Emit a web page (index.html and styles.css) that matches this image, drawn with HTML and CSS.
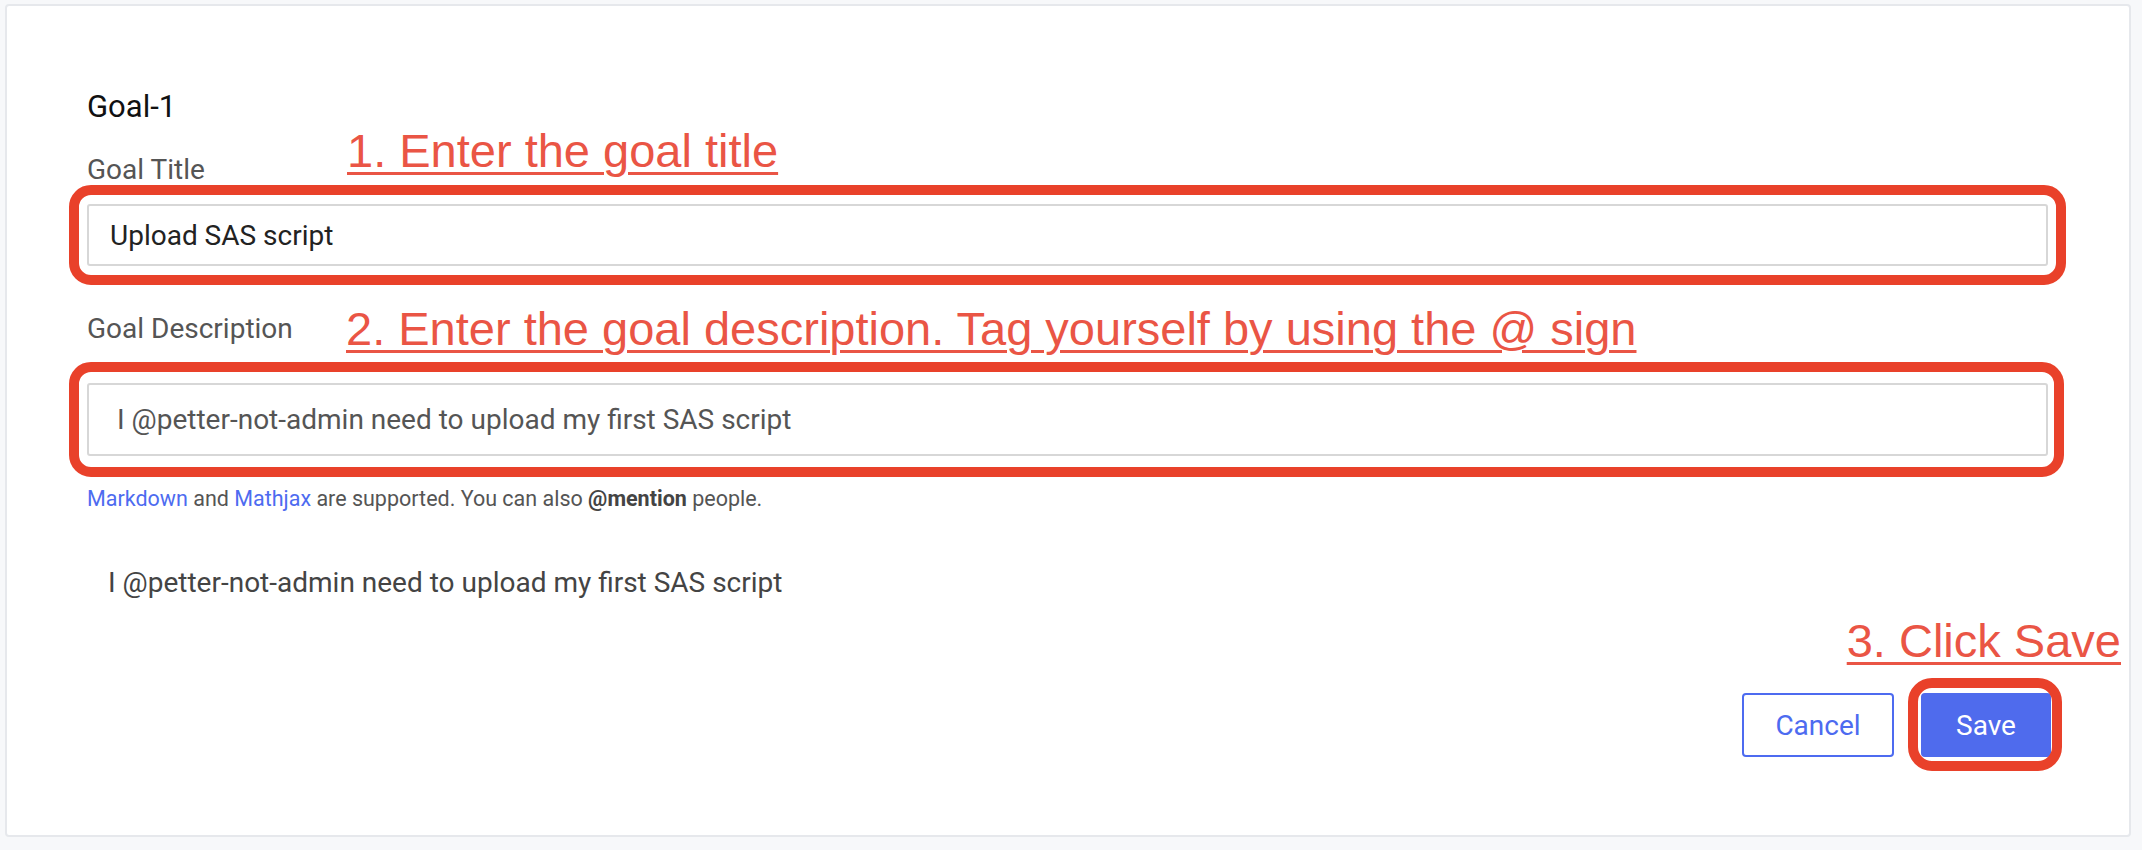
FILE: index.html
```html
<!DOCTYPE html>
<html lang="en">
<head>
<meta charset="utf-8">
<title>Goal-1</title>
<link rel="stylesheet" href="styles.css">
</head>
<body>
<div class="card">
  <h2 class="goal-heading">Goal-1</h2>

  <div class="field field-title">
    <label class="field-label" for="goal-title">Goal Title</label>
    <span class="annot annot-1">1. Enter the goal title</span>
    <div class="boxed boxed-title">
      <input id="goal-title" class="text-input" type="text" value="Upload SAS script">
    </div>
  </div>

  <div class="field field-desc">
    <label class="field-label" for="goal-desc">Goal Description</label>
    <span class="annot annot-2">2. Enter the goal description. Tag yourself by using the @ sign</span>
    <div class="boxed boxed-desc">
      <div id="goal-desc" class="desc-input">I @petter-not-admin need to upload my first SAS script</div>
    </div>
  </div>

  <p class="help">
    <a class="help-link" href="#">Markdown</a> and <a class="help-link" href="#">Mathjax</a> are supported. You can also <strong>@mention</strong> people.
  </p>

  <p class="preview">I @petter-not-admin need to upload my first SAS script</p>

  <div class="actions">
    <span class="annot annot-3">3. Click Save</span>
    <button class="btn btn-cancel" type="button">Cancel</button>
    <div class="boxed boxed-save">
      <button class="btn btn-save" type="button">Save</button>
    </div>
  </div>
</div>
</body>
</html>
```

FILE: styles.css
```css
* {
  box-sizing: border-box;
}

html, body {
  margin: 0;
  padding: 0;
}

body {
  background: #f7f8fa;
  font-family: Roboto, "Noto Sans", "Liberation Sans", sans-serif;
  padding: 4px 11px 13px 5px;
}

.card {
  background: #ffffff;
  border: 2px solid #e6e8ec;
  border-radius: 4px;
  padding: 83px 81px 78px 80px;
}

.goal-heading {
  margin: 0;
  font-size: 31px;
  line-height: 36px;
  font-weight: 400;
  color: #111111;
}

.field {
  position: relative;
}

.field-title {
  margin-top: 29px;
}

.field-desc {
  margin-top: 47px;
}

.field-label {
  display: block;
  font-size: 28px;
  line-height: 32px;
  color: #555555;
}

.field-title .boxed {
  margin-top: 18px;
}

.field-desc .boxed {
  margin-top: 38px;
}

.boxed {
  position: relative;
}

.boxed::after {
  content: "";
  position: absolute;
  border: 10px solid #e9412a;
  border-radius: 22px;
  pointer-events: none;
}

.boxed-title::after {
  inset: -19px -18px;
}

.boxed-desc::after {
  inset: -21px -16px -21px -18px;
}

.boxed-save::after {
  inset: -15px -11px -14px -13px;
  border-radius: 24px;
}

.text-input {
  display: block;
  width: 100%;
  height: 62px;
  border: 2px solid #d7d7d7;
  border-radius: 3px;
  padding: 0 21px;
  font-family: Roboto, "Noto Sans", sans-serif;
  font-size: 28px;
  color: #222222;
  background: #ffffff;
  outline: none;
}

.desc-input {
  display: flex;
  align-items: center;
  height: 73px;
  border: 2px solid #d7d7d7;
  border-radius: 3px;
  padding: 0 28px;
  font-size: 28px;
  color: #555555;
  background: #ffffff;
}

.help {
  margin: 30px 0 0;
  font-size: 21.5px;
  line-height: 25px;
  color: #555555;
}

.help-link {
  color: #4d6bf0;
  text-decoration: none;
}

.help strong {
  font-weight: 700;
  color: #444444;
}

.preview {
  margin: 55px 0 0;
  padding-left: 21px;
  font-size: 28px;
  line-height: 33px;
  color: #444444;
}

.actions {
  position: relative;
  margin-top: 94px;
  margin-right: -3px;
  display: flex;
  justify-content: flex-end;
  align-items: center;
  gap: 27px;
}

.btn {
  display: flex;
  align-items: center;
  justify-content: center;
  height: 64px;
  border-radius: 4px;
  font-family: Roboto, "Noto Sans", sans-serif;
  font-size: 28px;
  font-weight: 400;
  cursor: pointer;
}

.btn-cancel {
  width: 152px;
  background: #ffffff;
  border: 2px solid #4d6bf0;
  color: #4d6bf0;
}

.btn-save {
  width: 130px;
  background: #4f6bed;
  border: 2px solid #4f6bed;
  color: #ffffff;
}

.annot {
  position: absolute;
  font-family: "Liberation Sans", Arial, sans-serif;
  font-size: 47px;
  line-height: 47px;
  color: #ea5545;
  text-decoration: underline;
  text-decoration-thickness: 3px;
  text-underline-offset: 5px;
  white-space: nowrap;
}

.annot-1 {
  left: 260px;
  top: -27px;
}

.annot-2 {
  left: 259px;
  top: -8px;
}

.annot-3 {
  right: -70px;
  top: -76px;
}
```
